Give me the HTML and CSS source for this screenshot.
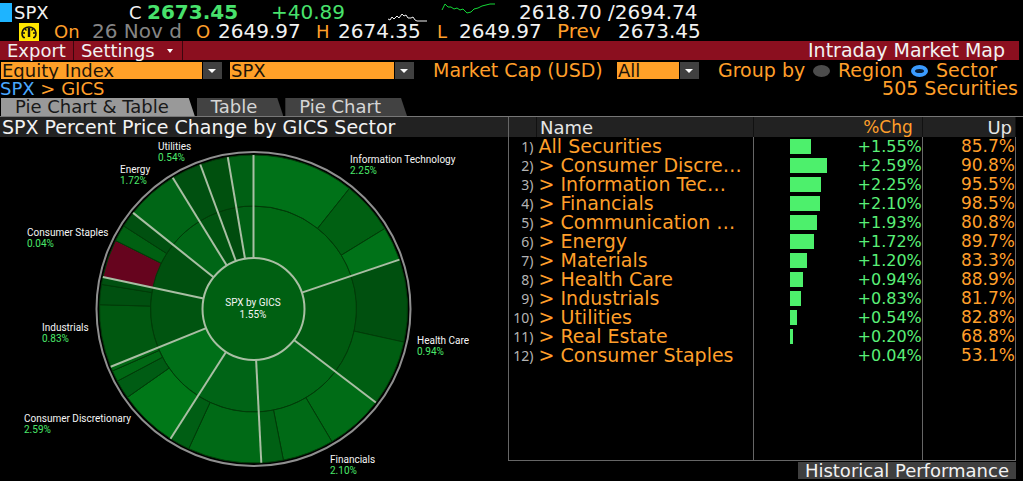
FILE: index.html
```html
<!DOCTYPE html>
<html lang="en">
<head>
<meta charset="utf-8">
<title>Intraday Market Map</title>
<link rel="stylesheet" href="styles.css">
</head>
<body>
<main class="terminal">
  <header class="quote">
    <div class="quote-row quote-last">
      <span class="marker"></span>
      <span class="symbol">SPX</span>
      <span class="symbol">C</span>
      <span class="last">2673.45</span>
      <span class="change">+40.89</span>
      <svg class="spark" viewBox="0 0 120 20" width="120" height="20" aria-hidden="true">
        <path d="M2 17l2 1 2-3 2 2 3-3 2 2 3-4 2 2 2-1 2 3 3 0 2-1 2 3 2 1h10" fill="none" stroke="#f2f2f2"/>
        <path d="M56 8l3-6 3 3 3 0 3 2 3-1 3 2 3-1 4 4 4-1 3-3 4-1 4-2 4-1 4-1h5" fill="none" stroke="#14d636"/>
      </svg>
      <span>2618.70</span>
      <span>/2694.74</span>
    </div>
    <div class="quote-row quote-day">
      <svg class="gauge" viewBox="0 0 20 18" width="20" height="18" aria-hidden="true">
        <rect width="20" height="18" fill="#ffe600"/>
        <path d="M6 14.500H4.500a7 6.500 0 1 1 11 0H14" fill="none" stroke="#111" stroke-width="1.600"/>
        <path d="M10 5v9" stroke="#111" stroke-width="2.400"/>
        <path d="M4 10h2M14 10h2M6 6l1.500 1.500M14 6l-1.500 1.500" stroke="#111" stroke-width="1.300"/>
      </svg>
      <span class="amber symbol">On</span>
      <span class="dim">26 Nov d</span>
      <span class="amber symbol">O</span><span>2649.97</span>
      <span class="amber symbol">H</span><span>2674.35</span>
      <span class="amber symbol">L</span><span>2649.97</span>
      <span class="amber">Prev</span><span>2673.45</span>
    </div>
  </header>

  <nav class="menu">
    <button class="menu-item" type="button">Export</button>
    <button class="menu-item menu-settings" type="button">Settings <i class="caret"></i></button>
    <span class="menu-title">Intraday Market Map</span>
  </nav>

  <form class="filters">
    <span class="picker picker-type"><select aria-label="Asset type"><option>Equity Index</option></select></span>
    <span class="picker"><select aria-label="Index"><option>SPX</option></select></span>
    <label class="lead" for="cap">Market Cap (USD)</label>
    <span class="picker"><select id="cap"><option>All</option></select></span>
    <span class="lead">Group by</span>
    <input type="radio" name="group" id="region"><label class="choice" for="region">Region</label>
    <input type="radio" name="group" id="sector" checked><label class="choice" for="sector">Sector</label>
  </form>

  <div class="crumbs">
    <span><a href="#spx">SPX</a> &gt; GICS</span>
    <span class="count">505 Securities</span>
  </div>

  <div class="tabs" role="tablist">
    <button class="tab tab-active" role="tab" aria-selected="true" type="button">Pie Chart &amp; Table</button>
    <button class="tab" role="tab" type="button">Table</button>
    <button class="tab" role="tab" type="button">Pie Chart</button>
  </div>

  <div class="panels">
    <section class="chart">
      <h1 class="chart-title">SPX Percent Price Change by GICS Sector</h1>
      <svg class="pie" id="pie" viewBox="0 137 508 344" role="img" aria-label="SPX by GICS"></svg>
    </section>
    <section class="data">
      <table class="sectors">
        <colgroup><col class="c-num"><col class="c-name"><col class="c-bar"><col class="c-chg"><col class="c-up"></colgroup>
        <thead><tr><th></th><th class="name">Name</th><th class="chg-head" colspan="2">%Chg</th><th class="up-head">Up</th></tr></thead>
        <tbody id="rows"></tbody>
      </table>
      <button class="history" type="button">Historical Performance</button>
    </section>
  </div>
</main>
<script src="market.js"></script>
</body>
</html>
```
FILE: styles.css
```css
* { box-sizing: border-box; }
body {
  margin: 0;
  background: #000;
  color: #f2f2f2;
  font: 18px/19px "DejaVu Sans", Verdana, sans-serif;
  white-space: nowrap;
}
button, select { font: inherit; color: inherit; border: 0; border-radius: 0; margin: 0; }
.terminal { display: flex; flex-direction: column; min-height: 100vh; overflow: hidden; }
.amber { color: #ff9f2a; }
.dim { color: #858585; }

.quote { padding-top: 2px; font-size: 20px; }
.quote-row { display: grid; align-items: center; height: 20px; }
.quote-last { grid-template-columns: 14px 115px 18px 124px 115px 133px 89px 1fr; }
.quote-day { grid-template-columns: 35px 38px 104px 22px 98px 22px 99px 22px 98px 61px 1fr; padding-left: 19px; height: 19px; }
.marker { width: 12px; height: 19px; background: #1eb4ff; }
.last { color: #48e26c; font-weight: bold; }
.change { color: #48e26c; }
.symbol { font-size: 18px; }

.menu { display: flex; align-items: stretch; height: 19px; margin-right: 4px; background: #8b0f1f; }
.menu-item { padding: 0 7px; background: none; border-right: 1px solid #3c060e; line-height: 18px; }
.menu-settings { display: flex; align-items: center; gap: 12px; padding-right: 9px; }
.caret { border: 3px solid transparent; border-top: 4px solid #fff; border-bottom: 0; }
.menu-title { margin-left: auto; padding-right: 14px; font-size: 19px; line-height: 18px; }

.filters {
  display: grid;
  grid-template-columns: 229px 184px 203px 82px 114px 17px 81px 17px 1fr;
  align-items: center;
  height: 18px;
  margin-top: 1px;
  padding-left: 1px;
  color: #ff9f2a;
  font-size: 19px;
}
.lead { padding-left: 19px; }
.choice { padding-left: 8px; }
.picker { position: relative; display: block; height: 17px; }
.picker-type { margin-right: 8px; }
.picker select {
  display: block;
  appearance: none;
  width: 100%;
  height: 17px;
  padding: 0 20px 0 1px;
  background: linear-gradient(to left, #404040 19px, #000 19px, #000 20px, #ffa028 20px);
  color: #1c1408;
  font-size: 18px;
  line-height: 17px;
}
.picker::after {
  content: "";
  position: absolute;
  right: 6px;
  top: 7px;
  border: 4px solid transparent;
  border-top-color: #fff;
  border-bottom: 0;
  pointer-events: none;
}
.filters input { appearance: none; margin: 0; width: 17px; height: 12px; border-radius: 50%; background: #4c4c4c; }
.filters input:checked { background: #061a33; border: 4px solid #3b9bff; }

.crumbs { display: flex; justify-content: space-between; padding-right: 5px; color: #ff9f2a; height: 19px; }
.crumbs a { color: #4aa8ff; text-decoration: none; }
.count { font-size: 19px; }

.tabs { display: flex; gap: 2px; height: 18px; padding-left: 1px; }
.tab {
  padding: 0 26px 0 14px;
  background: #424242;
  color: #d6d6d6;
  line-height: 18px;
  clip-path: polygon(0 0, calc(100% - 6px) 0, 100% 100%, 0 100%);
}
.tab-active { background: #999; color: #181818; }

.panels { display: grid; grid-template-columns: 508fr 515fr; flex: 1; border-top: 1px solid #777; }
.chart-title { margin: 0; padding-left: 2px; height: 20px; background: #222; font-size: 19px; font-weight: normal; line-height: 20px; }
.pie { display: block; width: 100%; }
.ring, .hub-line, .spoke { fill: none; stroke: #a9bfa4; stroke-width: 2; }
.ring { stroke: #8f8f8f; }
.slice { stroke: #003c08; stroke-width: 1; }
.pie text { font: 10px Roboto, "Noto Sans", sans-serif; fill: #f5f5f5; }
.pie .pct { fill: #4be86a; }
.pie .mid { text-anchor: middle; fill: #f5f5f5; }

.data { display: flex; flex-direction: column; padding-right: 7px; }
.sectors { flex: 1; width: 100%; table-layout: fixed; border-collapse: collapse; border: 1px solid #666; border-top: 0; color: #ff9f2a; }
.c-num { width: 28px; }
.c-name { width: 217px; }
.c-bar { width: 36px; }
.c-chg { width: 132px; }
.c-up { width: 93px; }
.sectors th { height: 20px; padding: 0 4px; background: #222; border-right: 1px solid #111; font-weight: normal; text-align: left; color: #e6e6e6; }
.sectors td { height: 19px; padding: 0; }
.sectors td:nth-child(2), .sectors td:nth-child(4) { border-right: 1px solid #666; }
.sectors .chg-head { padding-right: 9px; font-size: 17px; text-align: right; color: #ff9f2a; }
.sectors .up-head { padding-right: 3px; text-align: right; }
.sectors .num { color: #b4b4b4; font: 14px/19px "Noto Sans", sans-serif; text-align: right; padding-right: 3px; }
.sectors .name { padding-left: 3px; }
.sectors td.name { padding-left: 2px; font-size: 19px; }
.value { display: flex; align-items: center; justify-content: space-between; }
.sectors .chg { font-size: 16px; text-align: right; color: #5af078; }
.sectors .up { font-size: 17px; text-align: right; }
.bar { display: block; height: 15px; background: #4df06c; }
.sectors .filler td { height: auto; }
.history { align-self: flex-end; margin: 1px 0 2px; padding: 0 7px; height: 17px; background: #3f3f3f; line-height: 16px; }
```
FILE: market.js
```js
const sectors = [
  ["All Securities", "1.55", "85.7", 21],
  ["> Consumer Discre…", "2.59", "90.8", 37],
  ["> Information Tec…", "2.25", "95.5", 31],
  ["> Financials", "2.10", "98.5", 30],
  ["> Communication …", "1.93", "80.8", 27],
  ["> Energy", "1.72", "89.7", 24],
  ["> Materials", "1.20", "83.3", 17],
  ["> Health Care", "0.94", "88.9", 13],
  ["> Industrials", "0.83", "81.7", 11],
  ["> Utilities", "0.54", "82.8", 7],
  ["> Real Estate", "0.20", "68.8", 3],
  ["> Consumer Staples", "0.04", "53.1", 0]
];
document.getElementById("rows").innerHTML = sectors.map(([name, chg, up, bar], i) =>
  `<tr><td class="num">${i + 1})</td><td class="name">${name}</td>` +
  `<td></td><td class="chg"><div class="value"><span class="bar" style="width:${bar}px"></span>+${chg}%</div></td>` +
  `<td class="up">${up}%</td></tr>`).join("") +
  `<tr class="filler"><td></td><td></td><td></td><td></td><td></td></tr>`;

// Each group: start angle, inner colour, then [end angle, outer colour] slices, clockwise from the top.
const groups = [
  [0, "#006a14", [[38.5, "#007218"], [58.5, "#006012"], [71.3, "#007218"]]],
  [71.3, "#005a10", [[102.4, "#00500f"], [127.4, "#005e12"]]],
  [127.4, "#006816", [[149.4, "#006c16"], [168.8, "#006a16"], [177.1, "#006014"]]],
  [177.1, "#006416", [[204.9, "#006a16"], [212.6, "#005e14"]]],
  [212.6, "#007018", [[235, "#007818"], [242.1, "#005c14"], [246.3, "#006814"], [248, "#006814"]]],
  [248, "#005410", [[271.6, "#005810"], [279.2, "#005010"], [282, "#005010"]]],
  [282, "#00500f", [[296.4, "#66041e"], [302.6, "#006012"], [308.6, "#005010"]]],
  [308.6, "#006616", [[328.4, "#006616"]]],
  [328.4, "#005410", [[339.8, "#005010"]]],
  [339.8, "#004c0e", [[350.4, "#00500e"]]],
  [350.4, "#006014", [[360, "#006014"]]]
];
const cx = 253.5, cy = 309;
const at = (r, deg) => {
  const a = deg * Math.PI / 180;
  return `${(cx + r * Math.sin(a)).toFixed(1)} ${(cy - r * Math.cos(a)).toFixed(1)}`;
};
const slice = (r0, r1, a, b, fill) =>
  `<path class="slice" fill="${fill}" d="M${at(r0, a)}L${at(r1, a)}A${r1} ${r1} 0 0 1 ${at(r1, b)}L${at(r0, b)}A${r0} ${r0} 0 0 0 ${at(r0, a)}Z"/>`;

let art = "";
groups.forEach(([start, inner, parts]) => {
  art += slice(51, 103, start, parts[parts.length - 1][0], inner);
  let from = start;
  parts.forEach(([to, fill]) => { art += slice(103, 154, from, to, fill); from = to; });
});
groups.forEach(([start]) => { art += `<path class="spoke" d="M${at(51, start)}L${at(154, start)}"/>`; });
art += `<circle cx="${cx}" cy="${cy}" r="51" fill="#006012"/><circle class="hub-line" cx="${cx}" cy="${cy}" r="51"/>`;
art += `<circle class="ring" cx="${cx}" cy="${cy}" r="157"/>`;
art += `<text class="mid" x="253" y="306">SPX by GICS</text><text class="mid" x="253" y="318">1.55%</text>`;
[
  ["Utilities", "0.54%", 158, 150],
  ["Energy", "1.72%", 120, 173],
  ["Information Technology", "2.25%", 350, 163],
  ["Consumer Staples", "0.04%", 27, 236],
  ["Industrials", "0.83%", 42, 331],
  ["Health Care", "0.94%", 417, 344],
  ["Consumer Discretionary", "2.59%", 24, 422],
  ["Financials", "2.10%", 330, 463]
].forEach(([name, pct, x, y]) => {
  art += `<text x="${x}" y="${y}">${name}</text><text class="pct" x="${x}" y="${y + 11}">${pct}</text>`;
});
document.getElementById("pie").innerHTML = art;
```
